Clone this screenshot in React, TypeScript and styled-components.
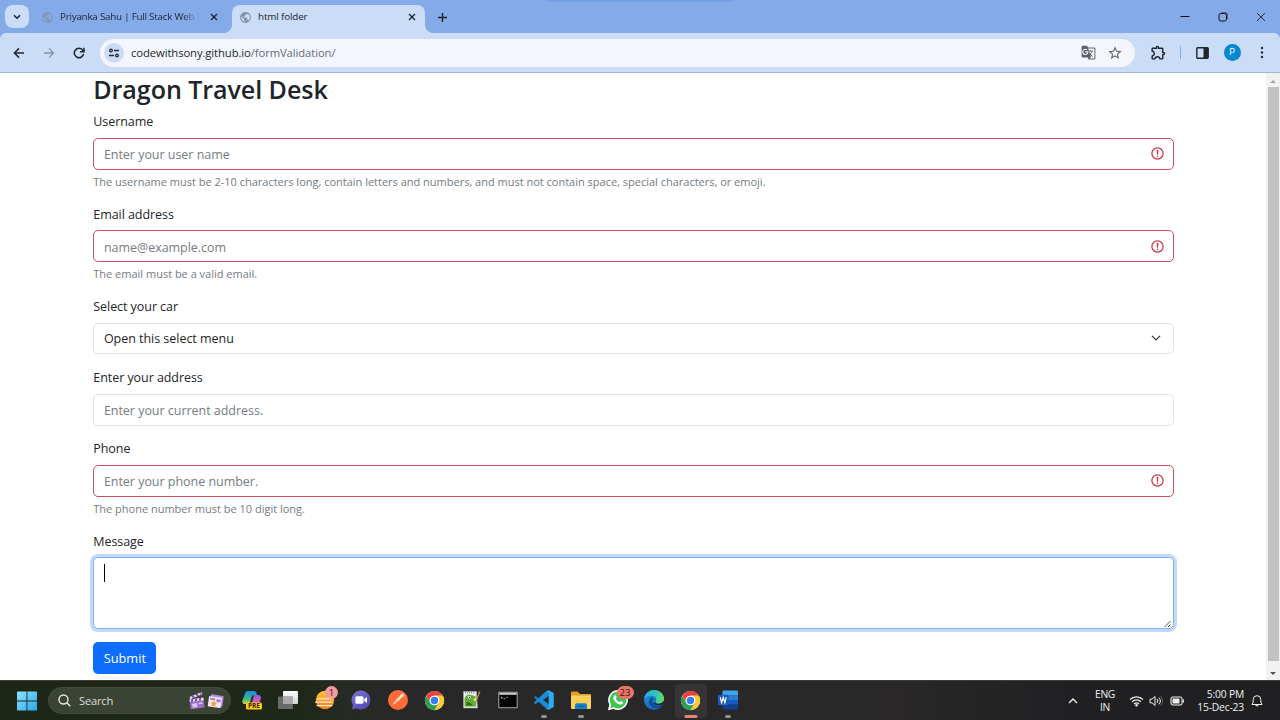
import React from "react";
import styled, { createGlobalStyle, css } from "styled-components";
import { MdPublic, MdGTranslate, MdStarBorder, MdOutlineExtension } from "react-icons/md";

const Global = createGlobalStyle`
  *, *::before, *::after { box-sizing: border-box; }
  body { margin: 0; background: #fff; overflow: hidden; }
  body, input, textarea, button { font-family: "Open Sans", "Noto Sans", sans-serif; }
`;

const Screen = styled.div`
  width: 1280px;
  height: 720px;
  display: flex;
  flex-direction: column;
  overflow: hidden;
  background: #fff;
`;

/* ---------- Browser chrome ---------- */

const TabStrip = styled.header`
  position: relative;
  height: 33px;
  flex: none;
  display: flex;
  background: #84abe8;
  color: #1c2430;
`;

const ShareBar = styled.div`
  position: absolute;
  left: 547px;
  top: 0;
  width: 186px;
  height: 2px;
  background: #749fe2;
  border-radius: 0 0 3px 3px;
`;

const TabSearch = styled.button`
  width: 24px;
  height: 23px;
  margin: 5px 0 0 5px;
  padding: 0;
  border: 0;
  border-radius: 8px;
  background: #cbdcf6;
  display: grid;
  place-items: center;
  flex: none;
`;

const Tab = styled.div<{ $active?: boolean }>`
  position: relative;
  display: flex;
  align-items: center;
  height: 28px;
  margin-top: 5px;
  padding: 0 7px 4px ${(p) => (p.$active ? 7 : 12)}px;
  width: ${(p) => (p.$active ? 193 : 203)}px;
  flex: none;
  ${(p) =>
    p.$active &&
    css`
      background: #cbdcf6;
      border-radius: 8px 8px 0 0;
      &::before,
      &::after {
        content: "";
        position: absolute;
        bottom: 0;
        width: 8px;
        height: 8px;
      }
      &::before {
        left: -8px;
        background: radial-gradient(circle at 0 0, transparent 7.6px, #cbdcf6 8.2px);
      }
      &::after {
        right: -8px;
        background: radial-gradient(circle at 100% 0, transparent 7.6px, #cbdcf6 8.2px);
      }
    `}
`;

const TabTitle = styled.span<{ $fade?: boolean }>`
  flex: 1;
  margin-left: 6px;
  font-size: 9.8px;
  line-height: 14px;
  letter-spacing: ${(p) => (p.$fade ? -0.22 : -0.12)}px;
  white-space: nowrap;
  ${(p) => p.$fade && css`
    min-width: 0;
    mask-image: linear-gradient(to right, #000 88%, transparent 100%);
  `}
`;

const TabClose = styled.span<{ $inset?: boolean }>`
  display: grid;
  place-items: center;
  width: 13px;
  height: 13px;
  margin-left: 8px;
  margin-right: ${(p) => (p.$inset ? 5 : 0)}px;
`;

const NewTab = styled.span`
  display: grid;
  place-items: center;
  width: 16px;
  height: 16px;
  margin: 9px 0 0 9px;
`;

const WindowButtons = styled.div`
  display: flex;
  align-items: center;
  margin-left: auto;
  height: 33px;
  gap: 28px;
  padding-right: 14px;
`;

const ToolbarBack = styled.div`
  background: #84abe8;
  flex: none;
`;

const Toolbar = styled.div`
  height: 40px;
  display: flex;
  align-items: center;
  background: #cbdcf6;
  border-radius: 6px 6px 0 0;
  border-bottom: 1px solid #a3b4d2;
  color: #1f2630;
  padding-left: 11.5px;
`;

const NavIcon = styled.span<{ $muted?: boolean; $last?: boolean }>`
  display: grid;
  place-items: center;
  width: 14px;
  height: 14px;
  margin-right: ${(p) => (p.$last ? 14.5 : 16)}px;
  color: ${(p) => (p.$muted ? "#8592a7" : "#1f2630")};
`;

const Omnibox = styled.div`
  display: flex;
  align-items: center;
  width: 1035px;
  height: 28px;
  margin-right: 14.5px;
  padding: 0 12px 0 4px;
  border-radius: 14px;
  background: #f3f7fd;
  color: #5c6168;
`;

const SiteInfo = styled.span`
  display: grid;
  place-items: center;
  width: 20px;
  height: 20px;
  border-radius: 50%;
  background: #cbdcf6;
`;

const Url = styled.span`
  flex: 1;
  margin-left: 7px;
  font-size: 11.3px;
  letter-spacing: -0.11px;
  color: #656c76;
  b { font-weight: 400; color: #20262e; }
`;

const StarSlot = styled.span`
  display: grid;
  margin-left: 11px;
`;

const ToolbarDivider = styled.span`
  width: 1px;
  height: 13px;
  margin: 0 15px 0 13px;
  background: #84abe8;
`;

const Avatar = styled.span`
  display: grid;
  place-items: center;
  width: 17px;
  height: 17px;
  margin: 0 19.5px 0 15px;
  border-radius: 50%;
  background: #0288d1;
  color: #fff;
  font: 9px/17px Roboto, sans-serif;
`;

/* ---------- Page ---------- */

const Viewport = styled.div`
  flex: 1;
  min-height: 0;
  display: flex;
`;

const Page = styled.main`
  flex: 1;
  padding: 0 92.2px 0 93.3px;
  color: #212529;
  overflow: hidden;
`;

const Heading = styled.h1`
  margin: 0 0 6.3px;
  height: 32px;
  font-size: 25.1px;
  line-height: 32px;
  font-weight: 600;
  letter-spacing: -0.08px;
`;

const Group = styled.div<{ $h: number }>`
  height: ${(p) => p.$h}px;
`;

const Label = styled.label`
  display: block;
  height: 20px;
  margin-bottom: 6.7px;
  font-size: 12.5px;
  line-height: 22.6px;
  letter-spacing: -0.06px;
`;

const Field = styled.div`
  position: relative;
`;

const controlBox = css`
  display: block;
  width: 100%;
  border: 1px solid #dee2e6;
  border-radius: 5px;
  background: #fff;
  color: #212529;
  font-size: 12.5px;
  line-height: 20px;
  letter-spacing: -0.03px;
  outline: 0;
`;

const Input = styled.input<{ $invalid?: boolean }>`
  ${controlBox}
  height: 32px;
  padding: 2px 10px 0 9.6px;
  border-color: ${(p) => (p.$invalid ? "#c9505c" : "#dee2e6")};
  &::placeholder { color: #757c84; opacity: 1; }
`;

const SelectBox = styled.div`
  ${controlBox}
  height: 31px;
  padding: 2px 12px 0 9.6px;
  display: flex;
  align-items: center;
  justify-content: space-between;
  & > svg { margin-bottom: 2px; }
`;

const InvalidMark = styled.svg`
  position: absolute;
  right: 8.5px;
  top: 8.4px;
`;

const Help = styled.div`
  margin-top: 3px;
  font-size: 11px;
  line-height: 18px;
  letter-spacing: -0.005px;
  color: #737b83;
`;

const MessageBox = styled.div`
  ${controlBox}
  position: relative;
  height: 72px;
  padding: 6px 10px;
  border-color: #86b0f2;
  box-shadow: 0 0 0 3px #c3d9fc;
`;

const Caret = styled.span`
  display: block;
  width: 1px;
  height: 18px;
  background: #000;
`;

const Grip = styled.svg`
  position: absolute;
  right: 1px;
  bottom: 0;
`;

const Submit = styled.button`
  display: block;
  width: 63px;
  height: 32px;
  padding: 0 0 1px;
  border: 0;
  border-radius: 5px;
  background: #0d6efd;
  color: #fff;
  font-size: 12.8px;
  line-height: 20px;
`;

const ScrollBar = styled.div`
  width: 14px;
  display: flex;
  flex-direction: column;
  align-items: center;
  background: #f1f1f1;
  padding: 0 1px;
`;

const ScrollArrow = styled.span<{ $down?: boolean }>`
  display: grid;
  place-items: center;
  height: ${(p) => (p.$down ? 19 : 14)}px;
  padding-top: ${(p) => (p.$down ? 5 : 2)}px;
  &::before {
    content: "";
    border: 3px solid transparent;
    border-width: ${(p) => (p.$down ? "3.5px 3.5px 0" : "0 3.5px 3.5px")};
    border-${(p) => (p.$down ? "top" : "bottom")}-color: ${(p) => (p.$down ? "#505050" : "#a3a3a3")};
  }
`;

const ScrollThumb = styled.span`
  flex: 1;
  width: 11px;
  background: #c1c1c1;
`;

/* ---------- Taskbar ---------- */

const Taskbar = styled.footer`
  height: 40px;
  flex: none;
  display: flex;
  align-items: center;
  border-top: 1px solid #3c3e3a;
  background: linear-gradient(to right, #1e2717 0, #1f2818 300px, #252a22 345px, #292828 400px, #292727 900px, #202023 1080px, #202023 100%);
  color: #f0f0f0;
`;

const StartSlot = styled.span`
  display: grid;
  margin: 0 11px 0 17px;
`;

const SearchBox = styled.div`
  display: flex;
  align-items: center;
  width: 183px;
  height: 27px;
  padding: 0 6px 0 9px;
  margin-right: 2.3px;
  border-radius: 14px;
  border: 1px solid #444c3e;
  background: #3b4335;
  & > span {
    flex: 1;
    margin-left: 8px;
    font-size: 11.2px;
    letter-spacing: -0.22px;
    color: #dddfdb;
  }
  & > svg + svg { margin-left: 1px; }
`;

const AppSlot = styled.div<{ $active?: boolean; $running?: boolean }>`
  position: relative;
  display: grid;
  place-items: center;
  width: 32.62px;
  height: 34px;
  margin: 0 2px;
  border-radius: 4px;
  & > svg { position: relative; top: -0.5px; }
  ${(p) => p.$active && css`background: #363434;`}
  ${(p) =>
    (p.$active || p.$running) &&
    css`
      &::after {
        content: "";
        position: absolute;
        bottom: 0;
        left: 50%;
        width: ${p.$active ? 13 : 6}px;
        height: 2.4px;
        transform: translateX(-50%);
        border-radius: 2px;
        background: ${p.$active ? "#e8826f" : "#929292"};
      }
    `}
`;

const Badge = styled.span<{ $w: number; $color: string }>`
  position: absolute;
  top: 2px;
  right: ${(p) => (p.$w > 14 ? 0.5 : 3)}px;
  width: ${(p) => p.$w}px;
  height: 13.5px;
  border-radius: 7px;
  background: ${(p) => p.$color};
  color: #27201f;
  font-size: 9.5px;
  line-height: 13.5px;
  text-align: center;
`;

const Tray = styled.div`
  margin-left: auto;
  display: flex;
  align-items: center;
  padding-right: 17px;
`;

const TrayText = styled.div<{ $align: string; $w: number }>`
  width: ${(p) => p.$w}px;
  font-size: 10.3px;
  line-height: 13px;
  letter-spacing: ${(p) => (p.$align === "center" ? -0.3 : -0.18)}px;
  white-space: nowrap;
  text-align: ${(p) => p.$align};
`;

const TrayIcon = styled.span<{ $l: number }>`
  display: grid;
  margin-left: ${(p) => p.$l}px;
`;

const Cross = () => (
  <svg width="8" height="8" viewBox="0 0 8 8" stroke="#1c2430" strokeWidth="1.4">
    <path d="M1 1l6 6M7 1L1 7" />
  </svg>
);

const InvalidIcon = () => (
  <InvalidMark width="15" height="15" viewBox="0 0 12 12" fill="none" stroke="#c93645">
    <circle cx="6" cy="6" r="4.5" />
    <path strokeLinejoin="round" d="M5.8 3.6h.4L6 6.5z" />
    <circle cx="6" cy="8.2" r=".6" fill="#c93645" stroke="none" />
  </InvalidMark>
);

const ChromeLogo = () => (
  <svg width="21" height="21" viewBox="0 0 48 48">
    <circle cx="24" cy="24" r="22" fill="#fff" />
    <path d="M24 13h19.05A22 22 0 0 0 4.95 13l9.52 16.5A11 11 0 0 1 24 13z" fill="#e8453c" />
    <path d="M33.53 29.5L24 46a22 22 0 0 0 19.05-33H24a11 11 0 0 1 9.53 16.5z" fill="#fcc934" />
    <path d="M14.47 29.5L4.95 13A22 22 0 0 0 24 46l9.53-16.5a11 11 0 0 1-19.06 0z" fill="#2aa14f" />
    <circle cx="24" cy="24" r="11" fill="#fff" />
    <circle cx="24" cy="24" r="8.6" fill="#3b7ded" />
  </svg>
);

const StartLogo = () => (
  <svg width="20" height="20" viewBox="0 0 20 20">
    <defs>
      <linearGradient id="win" x1="0" y1="0" x2="1" y2="1">
        <stop offset="0" stopColor="#8be4ff" />
        <stop offset="1" stopColor="#2aa6f0" />
      </linearGradient>
    </defs>
    <path fill="url(#win)" d="M0 1.2Q0 .5.7.5h8.8v9H0zM10.4.5h8.9q.7 0 .7.7v8.3h-9.6zM0 10.4h9.5v9H.7q-.7 0-.7-.7zM10.4 10.4H20v8.3q0 .7-.7.7h-8.9z" />
  </svg>
);

const Clapper = () => (
  <svg width="18" height="20" viewBox="0 0 18 20">
    <g transform="rotate(-8 9 12)">
      <rect x="2" y="7.5" width="14" height="10" rx="1" fill="#9a70c6" />
      <path d="M2 7.5h14v2.6H2z" fill="#eee3f7" />
      <path d="M4 7.5h2l-1 2.6H3zM8 7.5h2L9 10.1H7zM12 7.5h2l-1 2.6h-2z" fill="#6b3fa0" />
      <path d="M4 12h5v4H4zM10.5 12h4v1.5h-4z" fill="#d9c4ee" />
    </g>
    <path d="M1.5 6L13.5 1l.9 2.3L2.4 8.3z" fill="#e9dcf5" />
    <path d="M3.5 5.2l2-.8 1.6 2-2 .8zM7.5 3.5l2-.8 1.6 2-2 .8zM11.3 2l1.5-.7.9 2-.8.4z" fill="#7a4cb0" />
  </svg>
);

const Photo = () => (
  <svg width="17" height="18" viewBox="0 0 17 18">
    <g transform="rotate(8 9 9)">
      <rect x="3" y="3" width="13" height="11" rx="1" fill="#b58bdc" />
      <rect x="1.5" y="5" width="13" height="10.5" rx="1" fill="#f1e6fb" />
      <path d="M3 6.5h5v2H3zM9.500 7h4v3h-4z" fill="#a277d0" />
      <path d="M7 8.5l1.2 2.1 2.4.4-1.7 1.7.4 2.4L7 14l-2.2 1.1.4-2.4L3.500 11l2.400-.4z" fill="#f3a83a" />
    </g>
  </svg>
);

const Copilot = () => (
  <svg width="22" height="22" viewBox="0 0 22 22">
    <defs>
      <linearGradient id="cpa" x1="0" y1="0" x2="0" y2="1">
        <stop offset="0" stopColor="#1b8fe8" />
        <stop offset=".6" stopColor="#35b58a" />
        <stop offset="1" stopColor="#d9d33c" />
      </linearGradient>
      <linearGradient id="cpb" x1="0" y1="0" x2="0" y2="1">
        <stop offset="0" stopColor="#8a5be8" />
        <stop offset=".6" stopColor="#e05bb4" />
        <stop offset="1" stopColor="#f58b5a" />
      </linearGradient>
    </defs>
    <path d="M7 2h6c1.5 0 2 1 2.5 2.5L16 6h-3c-1.5 0-2 1-2.5 2.5L8.500 15H4c-2.500 0-3.200-2-2.500-4L4 4.500C4.700 2.700 5.500 2 7 2z" fill="url(#cpa)" />
    <path d="M13 6h4c2.500 0 3.500 2 2.700 4.200L18 15.500c-.6 1.800-1.500 2.500-3 2.500H8c1.500 0 2-1 2.500-2.500z" fill="url(#cpb)" />
    <rect x="5" y="13.5" width="16" height="7" rx="1.5" fill="#ffc916" />
    <text x="13" y="19.4" textAnchor="middle" fontSize="6.4" fontWeight="700" fontFamily="Open Sans, sans-serif" fill="#33280a">PRE</text>
  </svg>
);

const TaskView = () => (
  <svg width="22" height="20" viewBox="0 0 22 20">
    <defs>
      <linearGradient id="tv" x1="0" y1="0" x2="0" y2="1">
        <stop offset="0" stopColor="#fff" />
        <stop offset="1" stopColor="#d2d2d2" />
      </linearGradient>
    </defs>
    <rect x="6" y="1" width="15" height="13" rx=".8" fill="url(#tv)" />
    <rect x="1" y="6.5" width="15" height="12.5" rx=".8" fill="#777" fillOpacity=".85" />
    <path d="M6 6.5h10V14H6z" fill="#aaa" />
  </svg>
);

const Weather = () => (
  <svg width="22" height="22" viewBox="0 0 22 22">
    <defs>
      <linearGradient id="sun" x1="0" y1="0" x2="0" y2="1">
        <stop offset="0" stopColor="#ffc53a" />
        <stop offset="1" stopColor="#f07d16" />
      </linearGradient>
    </defs>
    <circle cx="11" cy="11" r="9.2" fill="url(#sun)" />
    <path d="M3.500 9.800h15M1.500 13.200H18M3 16.600h15" stroke="#f5e9d4" strokeWidth="1.2" strokeLinecap="round" />
  </svg>
);

const Meet = () => (
  <svg width="22" height="22" viewBox="0 0 22 22">
    <defs>
      <linearGradient id="mt" x1="0" y1="0" x2="1" y2="1">
        <stop offset="0" stopColor="#8077d8" />
        <stop offset="1" stopColor="#4c43ad" />
      </linearGradient>
    </defs>
    <path d="M11 1.500a9.500 9.500 0 1 1-4.700 17.800L2 20.500l1-4.500A9.500 9.500 0 0 1 11 1.500z" fill="url(#mt)" />
    <rect x="5.300" y="7.300" width="8.200" height="7.400" rx="1.500" fill="#fff" />
    <path d="M14.200 10l2.800-2.100v6.200L14.200 12z" fill="#fff" />
  </svg>
);

const Postman = () => (
  <svg width="22" height="22" viewBox="0 0 22 22">
    <circle cx="11" cy="11" r="10" fill="#ff6c37" />
    <path d="M16.300 4.700c.9.8.8 1.900.1 2.600L10 13l-4.800 3.500 3.400-5 5.900-6.500c.6-.6 1.200-.8 1.800-.3z" fill="#fbe3d9" />
    <path d="M8.600 11.500L10 13" stroke="#ff6c37" strokeWidth=".8" />
  </svg>
);

const NotepadPP = () => (
  <svg width="21" height="22" viewBox="0 0 21 22">
    <path d="M2.500 2.500h13v4l1 12.500H2.500z" fill="#e8ecec" stroke="#aab" strokeWidth=".6" />
    <path d="M4 3.800h9" stroke="#666" strokeDasharray="1 1" />
    <path d="M3.600 10.500c0-3 2.400-5 5.400-4.700 2 0 3 .9 5.500 1.500.8 1.700-.5 2.700-2.500 3.200l3 2.500v4.500H3.600z" fill="#62ad32" />
    <path d="M5.500 13c2 0 5 1 6.500 3.500H5.500z" fill="#286c1c" />
    <circle cx="8.300" cy="8.300" r="1.400" fill="#fff" />
    <circle cx="8.600" cy="8.300" r=".6" />
    <path d="M19.500 2.500l-4 10.500-1 3-.3-3.300 3.800-10.500z" fill="#b98c36" />
  </svg>
);

const Terminal = () => (
  <svg width="20" height="18" viewBox="0 0 20 18">
    <rect x=".8" y="1.300" width="18.400" height="15.400" fill="#050505" stroke="#a5a5a5" />
    <path d="M1.300 1.800h17.400v2H1.300z" fill="#c9c9c9" />
    <path d="M3 6l1.500.8L3 7.600M5.500 7.700h2M8.500 6.300h1.500" stroke="#ddd" strokeWidth=".7" fill="none" />
  </svg>
);

const VsCode = () => (
  <svg width="22" height="22" viewBox="0 0 22 22">
    <path d="M15.500 1.200L6.300 9.700 2.700 6.900l-1.500.8v1l11.500 10.700 2.800 1.500z" fill="#1479c4" />
    <path d="M15.500 20.800L6.300 12.300l-3.600 2.800-1.500-.8v-1L12.700 2.600l2.800-1.400z" fill="#1b8cda" />
    <path d="M15.500 1.200L20 3.400q.8.400.8 1.200v12.800q0 .8-.8 1.200l-4.500 2.200-1.800-1.300 1.800-1V3.800l-1.800-1.500z" fill="#2fa9ef" />
    <path d="M15.500 7l-5.300 4 5.300 4z" fill="#292727" />
  </svg>
);

const Explorer = () => (
  <svg width="22" height="20" viewBox="0 0 22 20">
    <path d="M1 2.500Q1 1.500 2 1.500h5.500L10 4h10q1 0 1 1v4H1z" fill="#e0a021" />
    <path d="M1 6.500q0-1 1-1h18q1 0 1 1V18q0 1-1 1H2q-1 0-1-1z" fill="#fdd05a" />
    <path d="M5 19v-4q0-1.700 1.700-1.700h8.600Q17 13.300 17 15v4z" fill="#1681cd" />
    <path d="M7.500 16.200h7" stroke="#0b5da3" strokeWidth="1.200" />
  </svg>
);

const WhatsApp = () => (
  <svg width="22" height="22" viewBox="0 0 22 22">
    <path d="M11 1a10 10 0 1 1-4.600 18.900L.9 21.200l1.400-5.400A10 10 0 0 1 11 1z" fill="#fff" />
    <path d="M11 2.600a8.400 8.400 0 1 1-4.300 15.600L3.200 19l.9-3.400A8.400 8.400 0 0 1 11 2.600z" fill="#3fc552" />
    <path d="M7.700 6.300c.5-.4 1-.2 1.200.2l.8 1.800c.1.500-.5 1-.8 1.400.8 1.700 2 2.700 3.600 3.400.5-.4.9-1.300 1.400-1.100l1.900.9c.5.3.2 1.600-.5 2.100-1.300.9-3.500.4-5.300-.8-1.600-1.100-3.100-2.900-3.500-4.500-.3-1.400.3-2.600 1.200-3.400z" fill="#fff" />
  </svg>
);

const Edge = () => (
  <svg width="22" height="22" viewBox="0 0 22 22">
    <defs>
      <linearGradient id="eg" x1="0" y1=".3" x2="1" y2=".4">
        <stop offset="0" stopColor="#2aa8e8" />
        <stop offset=".6" stopColor="#2fc6b8" />
        <stop offset="1" stopColor="#6bdc57" />
      </linearGradient>
      <linearGradient id="eb" x1="0" y1="0" x2=".6" y2="1">
        <stop offset="0" stopColor="#1f9be0" />
        <stop offset="1" stopColor="#1260b8" />
      </linearGradient>
    </defs>
    <circle cx="11" cy="11" r="10" fill="url(#eb)" />
    <path d="M1 10.500C1.500 5 5.700 1 11 1c6 0 10 4.200 10 8.500 0 3.300-2.500 5.200-5.300 5.200-2.300 0-3.500-.9-3.500-1.600 0-.6 1-.9 1-2.600 0-2-2-3.700-4.700-3.700C5 6.800 2 8.400 1 10.500z" fill="url(#eg)" />
    <path d="M8.300 8.500c-1.600 1-2.500 3-2 5.300.8 3.600 4.400 5.600 8.400 5 1.800-.3 3.600-1.200 4.500-2.600-4.500 2-9.200.7-9.900-3-.3-1.600.2-3 1.300-4-.8-.8-1.500-.9-2.300-.7z" fill="#0d4d92" />
    <path d="M12.300 13.200c0 .8 1.400 1.500 3.400 1.500 1.900 0 3.400-.8 4.400-2.200l1.900 1-3 2.200c-4 1.400-7.800.2-8.400-1.700z" fill="#292727" />
  </svg>
);

const Word = () => (
  <svg width="22" height="22" viewBox="0 0 22 22">
    <path d="M6.500 1.500H20q1 0 1 1v4H5.500v-4q0-1 1-1z" fill="#41a5ee" />
    <path d="M5.500 6.300H21V11H5.500z" fill="#2b7cd3" />
    <path d="M5.500 11H21v4.700H5.500z" fill="#185abd" />
    <path d="M5.500 15.600H21v3.900q0 1-1 1H6.500q-1 0-1-1z" fill="#103f91" />
    <rect x="1" y="5.800" width="10.500" height="10.500" rx="1" fill="#185abd" />
    <path d="M3.200 8.200l1.400 5.600 1.650-5.200 1.650 5.200 1.400-5.600" fill="none" stroke="#fff" strokeWidth="1.200" />
  </svg>
);

type FieldRow = { label: string; placeholder: string; help?: string };

const TextField = ({ label, placeholder, help }: FieldRow) => (
  <Group $h={help ? 92.3 : 71.2}>
    <Label>{label}</Label>
    <Field>
      <Input placeholder={placeholder} $invalid={!!help} />
      {help && <InvalidIcon />}
    </Field>
    {help && <Help>{help}</Help>}
  </Group>
);

const Browser = () => (
  <>
    <TabStrip>
      <ShareBar />
      <TabSearch>
        <svg width="8" height="6" viewBox="0 0 8 6" fill="none" stroke="#1c2430" strokeWidth="1.6">
          <path d="M1 1.200l3 3 3-3" />
        </svg>
      </TabSearch>
      <Tab>
        <MdPublic size={13} color="#8199b8" />
        <TabTitle $fade>Priyanka Sahu | Full Stack Web D</TabTitle>
        <TabClose $inset>
          <Cross />
        </TabClose>
      </Tab>
      <Tab $active>
        <MdPublic size={13} color="#8494a8" />
        <TabTitle>html folder</TabTitle>
        <TabClose>
          <Cross />
        </TabClose>
      </Tab>
      <NewTab>
        <svg width="9" height="9" viewBox="0 0 9 9" stroke="#1c2430" strokeWidth="1.4">
          <path d="M4.500 0v9M0 4.500h9" />
        </svg>
      </NewTab>
      <WindowButtons>
        <svg width="10" height="10" viewBox="0 0 10 10" stroke="#111">
          <path d="M.5 4.500h9" />
        </svg>
        <svg width="10" height="10" viewBox="0 0 10 10" fill="none" stroke="#111">
          <rect x="1" y="1.500" width="7.500" height="7.500" rx="1.800" />
          <path d="M3 .8h4.500q1.800 0 1.800 1.800V7" strokeWidth=".6" />
        </svg>
        <svg width="10" height="10" viewBox="0 0 10 10" stroke="#222" strokeWidth=".9">
          <path d="M1 1l8 8M9 1L1 9" />
        </svg>
      </WindowButtons>
    </TabStrip>
    <ToolbarBack>
      <Toolbar>
        <NavIcon>
          <svg width="12" height="12" viewBox="0 0 12 12" fill="none" stroke="currentColor" strokeWidth="1.5">
            <path d="M11 6H1.600M6 1.400L1.400 6 6 10.600" />
          </svg>
        </NavIcon>
        <NavIcon $muted>
          <svg width="12" height="12" viewBox="0 0 12 12" fill="none" stroke="currentColor" strokeWidth="1.3">
            <path d="M1 6h9.400M6 1.400L10.600 6 6 10.600" />
          </svg>
        </NavIcon>
        <NavIcon $last>
          <svg width="12" height="12" viewBox="0 0 12 12" fill="none" stroke="currentColor" strokeWidth="1.5">
            <path d="M10.600 7A4.700 4.700 0 1 1 9.600 3L10.600 4.200" />
            <path d="M11 .8v3.900H7.100" />
          </svg>
        </NavIcon>
        <Omnibox>
          <SiteInfo>
            <svg width="12" height="10" viewBox="0 0 12 10" fill="none" stroke="#20262e" strokeWidth="1.3">
              <circle cx="3" cy="2.500" r="1.300" />
              <path d="M6 2.500h5M1 7.500h5" />
              <circle cx="9" cy="7.500" r="1.300" />
            </svg>
          </SiteInfo>
          <Url>
            <b>codewithsony.github.io</b>/formValidation/
          </Url>
          <MdGTranslate size={15} />
          <StarSlot>
            <MdStarBorder size={16} />
          </StarSlot>
        </Omnibox>
        <MdOutlineExtension size={17} />
        <ToolbarDivider />
        <svg width="13" height="12" viewBox="0 0 13 12">
          <rect x=".8" y=".8" width="11.400" height="10.400" rx="1" fill="none" stroke="#20262e" strokeWidth="1.4" />
          <path d="M7.500 1h4.700v10H7.500z" fill="#20262e" />
        </svg>
        <Avatar>P</Avatar>
        <svg width="4" height="13" viewBox="0 0 4 13" fill="#20262e">
          <circle cx="2" cy="2" r="1.200" />
          <circle cx="2" cy="6.500" r="1.200" />
          <circle cx="2" cy="11" r="1.200" />
        </svg>
      </Toolbar>
    </ToolbarBack>
  </>
);

const apps: { icon: React.ReactNode; active?: boolean; running?: boolean; badge?: [string, number, string] }[] = [
  { icon: <Copilot /> },
  { icon: <TaskView /> },
  { icon: <Weather />, badge: ["1", 13.5, "#f79a9c"] },
  { icon: <Meet /> },
  { icon: <Postman /> },
  { icon: <ChromeLogo /> },
  { icon: <NotepadPP /> },
  { icon: <Terminal /> },
  { icon: <VsCode />, running: true },
  { icon: <Explorer />, running: true },
  { icon: <WhatsApp />, badge: ["23", 17, "#ee7565"] },
  { icon: <Edge /> },
  { icon: <ChromeLogo />, active: true },
  { icon: <Word />, running: true },
];

export default function App() {
  return (
    <Screen>
      <Global />
      <Browser />
      <Viewport>
        <Page>
          <Heading>Dragon Travel Desk</Heading>
          <TextField
            label="Username"
            placeholder="Enter your user name"
            help="The username must be 2-10 characters long, contain letters and numbers, and must not contain space, special characters, or emoji."
          />
          <TextField label="Email address" placeholder="name@example.com" help="The email must be a valid email." />
          <Group $h={71.2}>
            <Label>Select your car</Label>
            <SelectBox>
              <span>Open this select menu</span>
              <svg width="10" height="10" viewBox="0 0 16 16" fill="none" stroke="#343a40" strokeWidth="2.2" strokeLinecap="round" strokeLinejoin="round">
                <path d="m2 5 6 6 6-6" />
              </svg>
            </SelectBox>
          </Group>
          <TextField label="Enter your address" placeholder="Enter your current address." />
          <TextField label="Phone" placeholder="Enter your phone number." help="The phone number must be 10 digit long." />
          <Group $h={111.7}>
            <Label>Message</Label>
            <MessageBox>
              <Caret />
              <Grip width="9" height="9" viewBox="0 0 9 9" stroke="#444" strokeWidth=".9">
                <path d="M1.500 8l6-6M5 8l2.500-2.500" />
              </Grip>
            </MessageBox>
          </Group>
          <Submit>Submit</Submit>
        </Page>
        <ScrollBar>
          <ScrollArrow />
          <ScrollThumb />
          <ScrollArrow $down />
        </ScrollBar>
      </Viewport>
      <Taskbar>
        <StartSlot>
          <StartLogo />
        </StartSlot>
        <SearchBox>
          <svg width="13" height="13" viewBox="0 0 13 13" fill="none" stroke="#e6e8e4" strokeWidth="1.4">
            <circle cx="5.500" cy="5.500" r="4.500" />
            <path d="M8.800 8.800l3.500 3.500" />
          </svg>
          <span>Search</span>
          <Clapper />
          <Photo />
        </SearchBox>
        {apps.map((a, i) => (
          <AppSlot key={i} $active={a.active} $running={a.running}>
            {a.icon}
            {a.badge && (
              <Badge $w={a.badge[1]} $color={a.badge[2]}>
                {a.badge[0]}
              </Badge>
            )}
          </AppSlot>
        ))}
        <Tray>
          <svg width="10" height="6" viewBox="0 0 10 6" fill="none" stroke="#eee" strokeWidth="1.3">
            <path d="M1 5l4-4 4 4" />
          </svg>
          <TrayText $align="center" $w={54}>
            ENG
            <br />
            IN
          </TrayText>
          <TrayIcon $l={-3}>
            <svg width="15" height="12" viewBox="0 0 15 12" fill="none" stroke="#f0f0f0" strokeWidth="1.2">
              <path d="M1 4.500a9.200 9.200 0 0 1 13 0M3 6.800a6.300 6.300 0 0 1 9 0M5 9a3.500 3.500 0 0 1 5 0" />
              <circle cx="7.500" cy="10.300" r="1.200" fill="#f0f0f0" stroke="none" />
            </svg>
          </TrayIcon>
          <TrayIcon $l={5}>
            <svg width="15" height="12" viewBox="0 0 15 12" fill="none" stroke="#f0f0f0">
              <path d="M1 4.200h2l3-2.700v9L3 7.800H1z" />
              <path d="M8 4a3 3 0 0 1 0 4M9.800 2.600a5 5 0 0 1 0 6.800" />
              <path d="M11.600 1.300a7 7 0 0 1 0 9.400" stroke="#666" />
            </svg>
          </TrayIcon>
          <TrayIcon $l={6}>
            <svg width="15" height="10" viewBox="0 0 15 10">
              <rect x="1" y="1" width="11" height="8" rx="1.800" fill="none" stroke="#f0f0f0" strokeWidth="1.1" />
              <rect x="2.500" y="2.500" width="7" height="5" rx=".5" fill="#f0f0f0" />
              <path d="M13.400 3.500v3" stroke="#f0f0f0" strokeWidth="1.3" />
            </svg>
          </TrayIcon>
          <TrayText $align="right" $w={59}>
            5:00 PM
            <br />
            15-Dec-23
          </TrayText>
          <TrayIcon $l={7}>
            <svg width="12" height="14" viewBox="0 0 12 14" fill="none" stroke="#f0f0f0">
              <path d="M1 10.500l1.200-2.500V5.500a3.800 3.800 0 0 1 7.600 0V8l1.200 2.500zM4.400 10.800a1.700 1.700 0 0 0 3.200 0" />
            </svg>
          </TrayIcon>
        </Tray>
      </Taskbar>
    </Screen>
  );
}
